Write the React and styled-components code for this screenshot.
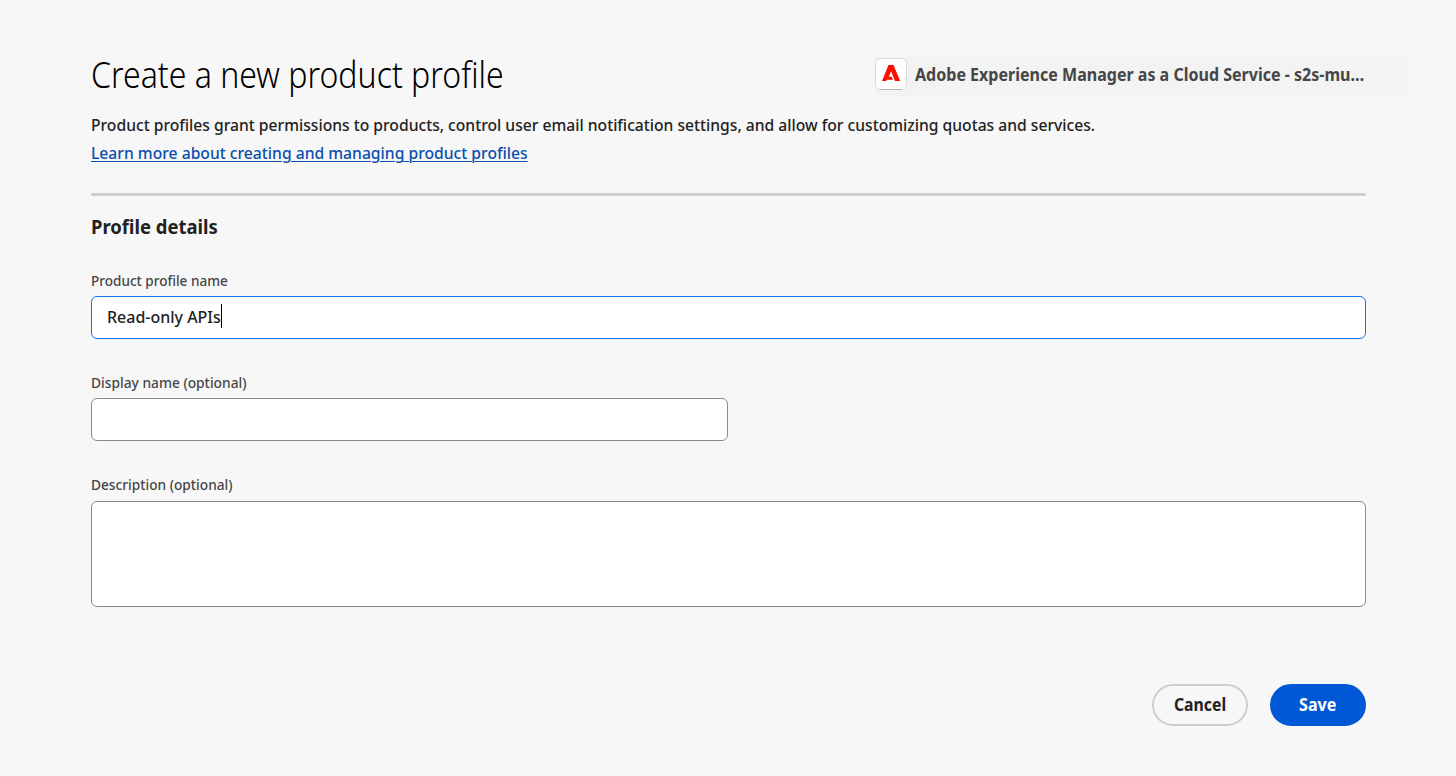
import React from "react";
import styled, { createGlobalStyle } from "styled-components";

const GlobalStyle = createGlobalStyle`
  *, *::before, *::after { box-sizing: border-box; }
  body {
    margin: 0;
    background: #f7f7f7;
    color: #222;
    font-family: "Noto Sans", "Open Sans", sans-serif;
    font-weight: 500;
    -webkit-font-smoothing: antialiased;
  }
`;

const Page = styled.main`
  height: 776px;
  padding: 57px 90px 50px 91px;
  display: flex;
  flex-direction: column;
  overflow: hidden;
`;

/* Narrows the typeface horizontally by a given ratio. */
const Narrow = styled.span`
  display: inline-block;
  white-space: nowrap;
  transform: scaleX(${(p) => p.$ratio});
  transform-origin: ${(p) => p.$origin || "left"} center;
`;

const Header = styled.header`
  display: flex;
  justify-content: space-between;
  margin-right: -42px;
  height: 41px;
`;

const Title = styled.h1`
  margin: 0;
  width: 420px;
  font-size: 36px;
  line-height: 35px;
  font-weight: 300;
  color: #000;
  white-space: nowrap;
`;

const Product = styled.div`
  display: flex;
  align-items: flex-start;
  width: 533px;
  height: 40px;
  padding-top: 1px;
  background: #f3f3f3;
`;

const Logo = styled.svg`
  display: block;
  flex: none;
  width: 32px;
  height: 32px;
`;

const ProductName = styled.span`
  margin-left: 8px;
  font-size: 17px;
  line-height: 34px;
  font-weight: 700;
  color: #464646;
`;

const Intro = styled.p`
  margin: 13px 0 0;
  font-size: 17px;
  line-height: 28px;
`;

const Link = styled.a`
  align-self: flex-start;
  height: 28px;
  font-size: 17px;
  line-height: 28px;
  color: #0a4fad;

  ${Narrow} {
    text-decoration: underline;
    text-decoration-thickness: 1px;
    text-underline-offset: 2px;
  }
`;

const Divider = styled.hr`
  width: 100%;
  height: 3px;
  margin: 26px 0 0;
  border: 0;
  border-radius: 2px;
  background: #cecece;
`;

const SectionTitle = styled.h2`
  margin: 17px 0 0;
  font-size: 20px;
  line-height: 28px;
  font-weight: 700;
`;

const Field = styled.div`
  display: flex;
  flex-direction: column;
  margin-top: ${(p) => p.$gap}px;
`;

const Label = styled.label`
  font-size: 15px;
  line-height: 18px;
  height: ${(p) => p.$height || 25}px;
  color: #464646;
`;

const Control = styled.div`
  display: flex;
  align-items: center;
  width: ${(p) => p.$width || "100%"};
  height: ${(p) => p.$height || 43}px;
  padding: 0 15px 3px;
  border: 1px solid ${(p) => (p.$focused ? "#1473e6" : "#8a8a8a")};
  border-radius: 6px;
  background: #fff;
  font-size: 17px;
`;

const Value = styled.span`
  width: 114px;
`;

const Caret = styled.span`
  width: 1px;
  height: 24px;
  background: #000;
`;

const Actions = styled.footer`
  display: flex;
  justify-content: flex-end;
  gap: 22px;
  margin-top: 77px;
`;

const Button = styled.button`
  width: 96px;
  height: 42px;
  padding: 0 0 1px;
  border: 2px solid ${(p) => (p.$primary ? "#0058d6" : "#cecece")};
  border-radius: 21px;
  background: ${(p) => (p.$primary ? "#0058d6" : "transparent")};
  color: ${(p) => (p.$primary ? "#fff" : "#222")};
  font: inherit;
  font-size: 17px;
  font-weight: 700;
`;

function ProductLogo() {
  return (
    <Logo viewBox="0 0 32 32" aria-hidden="true">
      <rect x="0.5" y="0.5" width="31" height="31" rx="5" fill="#fff" stroke="#dadada" />
      <path d="M5 31.5H27" stroke="#b4b4b4" />
      <path fill="#fa0f00" d="M13.5 7h5L25.2 23h-4.5q-.6 0-.9-.6L16.1 13.2l-2.3 5.5h2.9l1.2 3H11.9q-.4 1.3-1 1.3H7z" />
    </Logo>
  );
}

export default function App() {
  return (
    <Page>
      <GlobalStyle />
      <Header>
        <Title><Narrow $ratio={0.89}>Create a new product profile</Narrow></Title>
        <Product>
          <ProductLogo />
          <ProductName>
            <Narrow $ratio={0.943}>Adobe Experience Manager as a Cloud Service - s2s-mu…</Narrow>
          </ProductName>
        </Product>
      </Header>
      <Intro>
        <Narrow $ratio={0.921}>
          Product profiles grant permissions to products, control user email notification settings, and allow for customizing quotas and services.
        </Narrow>
      </Intro>
      <Link><Narrow $ratio={0.922}>Learn more about creating and managing product profiles</Narrow></Link>
      <Divider />
      <SectionTitle><Narrow $ratio={0.922}>Profile details</Narrow></SectionTitle>
      <Field $gap={30}>
        <Label><Narrow $ratio={0.904}>Product profile name</Narrow></Label>
        <Control $focused>
          <Value><Narrow $ratio={0.94}>Read-only APIs</Narrow></Value>
          <Caret />
        </Control>
      </Field>
      <Field $gap={34}>
        <Label><Narrow $ratio={0.917}>Display name (optional)</Narrow></Label>
        <Control $width="637px" />
      </Field>
      <Field $gap={34}>
        <Label $height={26}><Narrow $ratio={0.913}>Description (optional)</Narrow></Label>
        <Control $height={106} />
      </Field>
      <Actions>
        <Button><Narrow $ratio={0.93} $origin="center">Cancel</Narrow></Button>
        <Button $primary><Narrow $ratio={0.95} $origin="center">Save</Narrow></Button>
      </Actions>
    </Page>
  );
}
